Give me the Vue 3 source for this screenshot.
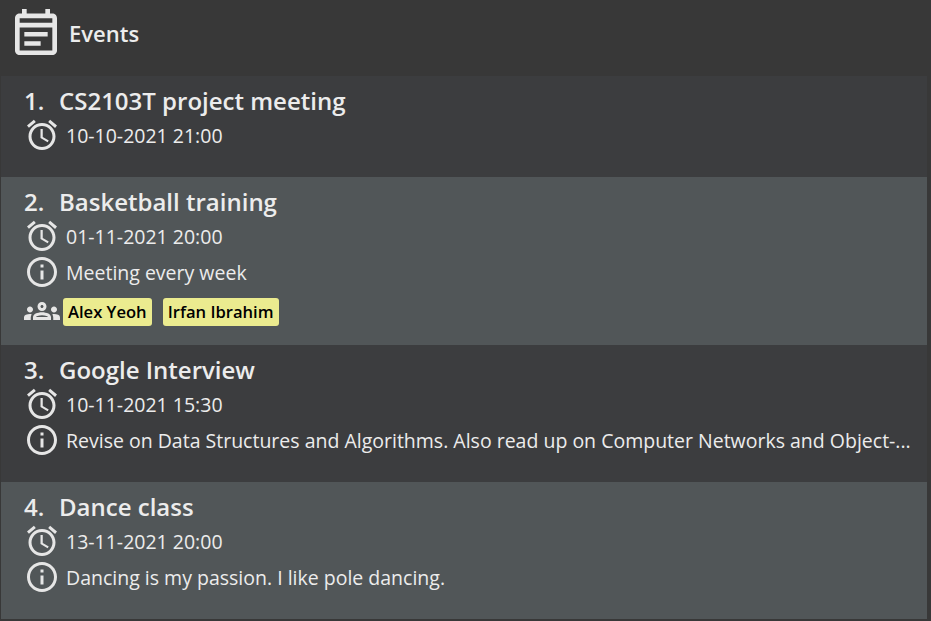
<script setup>
const events = [
  { name: 'CS2103T project meeting', time: '10-10-2021 21:00' },
  { name: 'Basketball training', time: '01-11-2021 20:00', info: 'Meeting every week', people: ['Alex Yeoh', 'Irfan Ibrahim'] },
  { name: 'Google Interview', time: '10-11-2021 15:30', info: 'Revise on Data Structures and Algorithms. Also read up on Computer Networks and Object-...' },
  { name: 'Dance class', time: '13-11-2021 20:00', info: 'Dancing is my passion. I like pole dancing.' },
]
</script>

<template>
  <main class="panel">
    <header class="header">
      <svg class="calendar" viewBox="3 2 18 20" preserveAspectRatio="none"><path d="M19 4h-1V2h-2v2H8V2H6v2H5c-1.100 0-2 .9-2 2v14c0 1.100.9 2 2 2h14c1.100 0 2-.9 2-2V6c0-1.100-.9-2-2-2zm0 16H5V10h14v10zm0-12H5V6h14v2zM7 12h10v2H7zm0 4h7v2H7z" /></svg>
      <h1>Events</h1>
    </header>
    <section class="list">
      <article v-for="(event, i) in events" :key="event.name" class="card">
        <h2><span class="number">{{ i + 1 }}.</span><span>{{ event.name }}</span></h2>
        <div class="row time">
          <svg class="icon" viewBox="2 2 20 20"><path d="M22 5.720l-4.600-3.860-1.290 1.530 4.600 3.860L22 5.720zM7.880 3.390L6.600 1.860 2 5.710l1.290 1.530 4.590-3.850zM12.500 8H11v6l4.750 2.850.75-1.230-4-2.370V8zM12 4c-4.970 0-9 4.030-9 9s4.020 9 9 9c4.970 0 9-4.030 9-9s-4.030-9-9-9zm0 16c-3.870 0-7-3.130-7-7s3.130-7 7-7 7 3.130 7 7-3.130 7-7 7z" /></svg>
          <span>{{ event.time }}</span>
        </div>
        <div v-if="event.info" class="row info">
          <svg class="icon" viewBox="2 2 20 20"><path d="M11 7h2v2h-2zm0 4h2v6h-2zm1-9C6.480 2 2 6.480 2 12s4.480 10 10 10 10-4.480 10-10S17.520 2 12 2zm0 18c-4.410 0-8-3.590-8-8s3.590-8 8-8 8 3.590 8 8-3.590 8-8 8z" /></svg>
          <span>{{ event.info }}</span>
        </div>
        <div v-if="event.people" class="people">
          <svg class="group" viewBox="0 6 24 12"><path d="M4 13c1.100 0 2-.9 2-2s-.9-2-2-2-2 .9-2 2 .9 2 2 2zm1.130 1.100C4.760 14.040 4.390 14 4 14c-.99 0-1.930.21-2.780.58C.48 14.900 0 15.620 0 16.430V18h4.500v-1.610c0-.83.23-1.610.63-2.290zM20 13c1.100 0 2-.9 2-2s-.9-2-2-2-2 .9-2 2 .9 2 2 2zm4 3.430c0-.81-.48-1.530-1.220-1.850-.85-.37-1.790-.58-2.780-.58-.39 0-.76.04-1.130.1.400.68.63 1.460.63 2.290V18H24v-1.570zM16.240 13.650C15.070 13.130 13.630 12.750 12 12.750s-3.070.39-4.240.9C6.680 14.130 6 15.210 6 16.390V18h12v-1.610c0-1.180-.68-2.260-1.760-2.740zM8.070 16c.09-.23.13-.39.91-.69.97-.38 1.990-.56 3.020-.56s2.050.18 3.020.56c.77.3.81.46.91.69H8.070zM12 8c.55 0 1 .45 1 1s-.45 1-1 1-1-.45-1-1 .45-1 1-1m0-2c-1.660 0-3 1.340-3 3s1.340 3 3 3 3-1.340 3-3-1.340-3-3-3z" /></svg>
          <span v-for="person in event.people" :key="person" class="tag">{{ person }}</span>
        </div>
      </article>
    </section>
  </main>
</template>

<style>
body { margin: 0; overflow: hidden; }
</style>
<style scoped>
.panel { box-sizing: border-box; width: 931px; height: 621px; background: #383838; color: #ececec; font-family: "Open Sans", sans-serif; overflow: hidden; }
.header { box-sizing: border-box; height: 76px; padding: 9px 0 0 15px; display: flex; align-items: flex-start; gap: 12px; }
svg { display: block; flex: none; fill: #e6e6e6; }
.calendar { width: 42px; height: 46px; }
h1 { margin: 7px 0 0; font-size: 22px; line-height: 34px; font-weight: 600; }
.list { margin: 0 4px 0 1px; }
.card { box-sizing: border-box; height: 137px; padding: 8px 0 0 23px; background: #3c3d3f; }
.card:first-child { height: 101px; }
.card:nth-child(2) { height: 168px; }
.card:nth-child(even) { background: #515658; }
h2 { display: flex; margin: 0; font-size: 24px; font-weight: 600; line-height: 34px; white-space: nowrap; }
.number { width: 35px; }
.row { display: flex; align-items: center; gap: 9px; height: 35px; padding-left: 3px; font-size: 19.500px; font-weight: 400; white-space: nowrap; }
.info { height: 36px; }
.icon { width: 30px; height: 30px; overflow: visible; }
.time .icon { margin-bottom: 1px; }
.people { display: flex; align-items: center; height: 43px; }
.group { width: 36px; height: 18px; margin: 0 3px 2px 0; }
.tag { padding: 0 5px; margin-right: 11px; border-radius: 3px; background: #ebeb8f; color: #000; font-size: 16.600px; line-height: 28px; font-weight: 600; white-space: nowrap; }
</style>
